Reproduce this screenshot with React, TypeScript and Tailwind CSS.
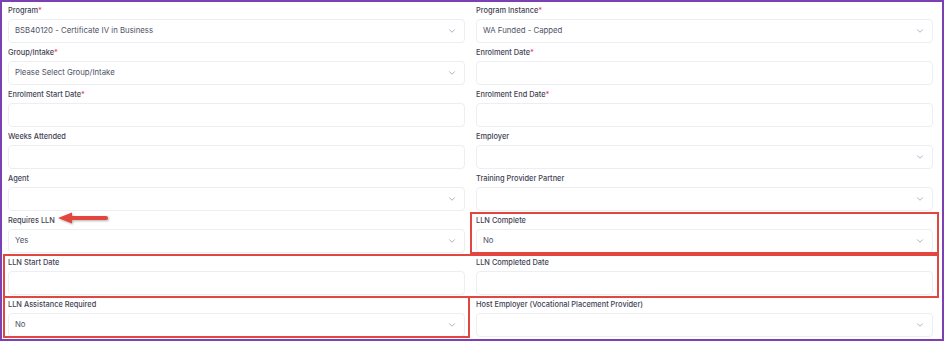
import { ChevronDown } from "lucide-react";

type Field = {
  label: string;
  required?: boolean;
  value?: string;
  select?: boolean;
};

const fields: Field[] = [
  { label: "Program", required: true, value: "BSB40120 - Certificate IV in Business", select: true },
  { label: "Program Instance", required: true, value: "WA Funded - Capped", select: true },
  { label: "Group/Intake", required: true, value: "Please Select Group/Intake", select: true },
  { label: "Enrolment Date", required: true },
  { label: "Enrolment Start Date", required: true },
  { label: "Enrolment End Date", required: true },
  { label: "Weeks Attended" },
  { label: "Employer", select: true },
  { label: "Agent", select: true },
  { label: "Training Provider Partner", select: true },
  { label: "Requires LLN", value: "Yes", select: true },
  { label: "LLN Complete", value: "No", select: true },
  { label: "LLN Start Date" },
  { label: "LLN Completed Date" },
  { label: "LLN Assistance Required", value: "No", select: true },
  { label: "Host Employer (Vocational Placement Provider)", select: true },
];

function FormField({ field }: { field: Field }) {
  return (
    <div className="flex flex-col">
      <label className="h-[17px] flex items-center text-[7.4px] font-medium text-[#3f4254]">
        {field.label}
        {field.required && <span className="text-[#f1416c]">*</span>}
      </label>
      <div className="h-[24px] rounded-[4px] border border-[#eceef3] bg-white flex items-center justify-between pl-[6px] pr-[7px]">
        <span className="text-[7.8px] text-[#4f5367]">{field.value ?? ""}</span>
        {field.select && (
          <ChevronDown size={10} strokeWidth={1.5} className="text-[#7e8299]" />
        )}
      </div>
    </div>
  );
}

export default function App() {
  return (
    <div
      className="relative w-[944px] h-[341px] bg-white"
      style={{ fontFamily: "Inter, 'Open Sans', sans-serif" }}
    >
      <div className="h-full border-2 border-[#7a40b4] pl-[6px] pr-[9px]">
        <div className="grid grid-cols-2 gap-x-[11px] gap-y-[1px]">
          {fields.map((f) => (
            <FormField key={f.label} field={f} />
          ))}
        </div>
      </div>

      {/* annotation boxes */}
      <div className="absolute left-[470px] top-[212px] w-[469px] h-[42px] border-2 border-[#e2463f]" />
      <div className="absolute left-[3px] top-[254px] w-[936px] h-[44px] border-2 border-[#e2463f]" />
      <div className="absolute left-[3px] top-[296px] w-[467px] h-[42px] border-2 border-[#e2463f]" />

      {/* arrow */}
      <svg
        className="absolute left-[56px] top-[211px]"
        width="54"
        height="16"
        viewBox="0 0 54 16"
      >
        <g style={{ filter: "drop-shadow(1px 1px 1px rgba(0,0,0,0.3))" }}>
          <line x1="14" y1="7" x2="50" y2="7" stroke="#e2463f" strokeWidth="4" strokeLinecap="round" />
          <polygon points="2,7 16,1.5 16,12.5" fill="#e2463f" />
        </g>
      </svg>
    </div>
  );
}
